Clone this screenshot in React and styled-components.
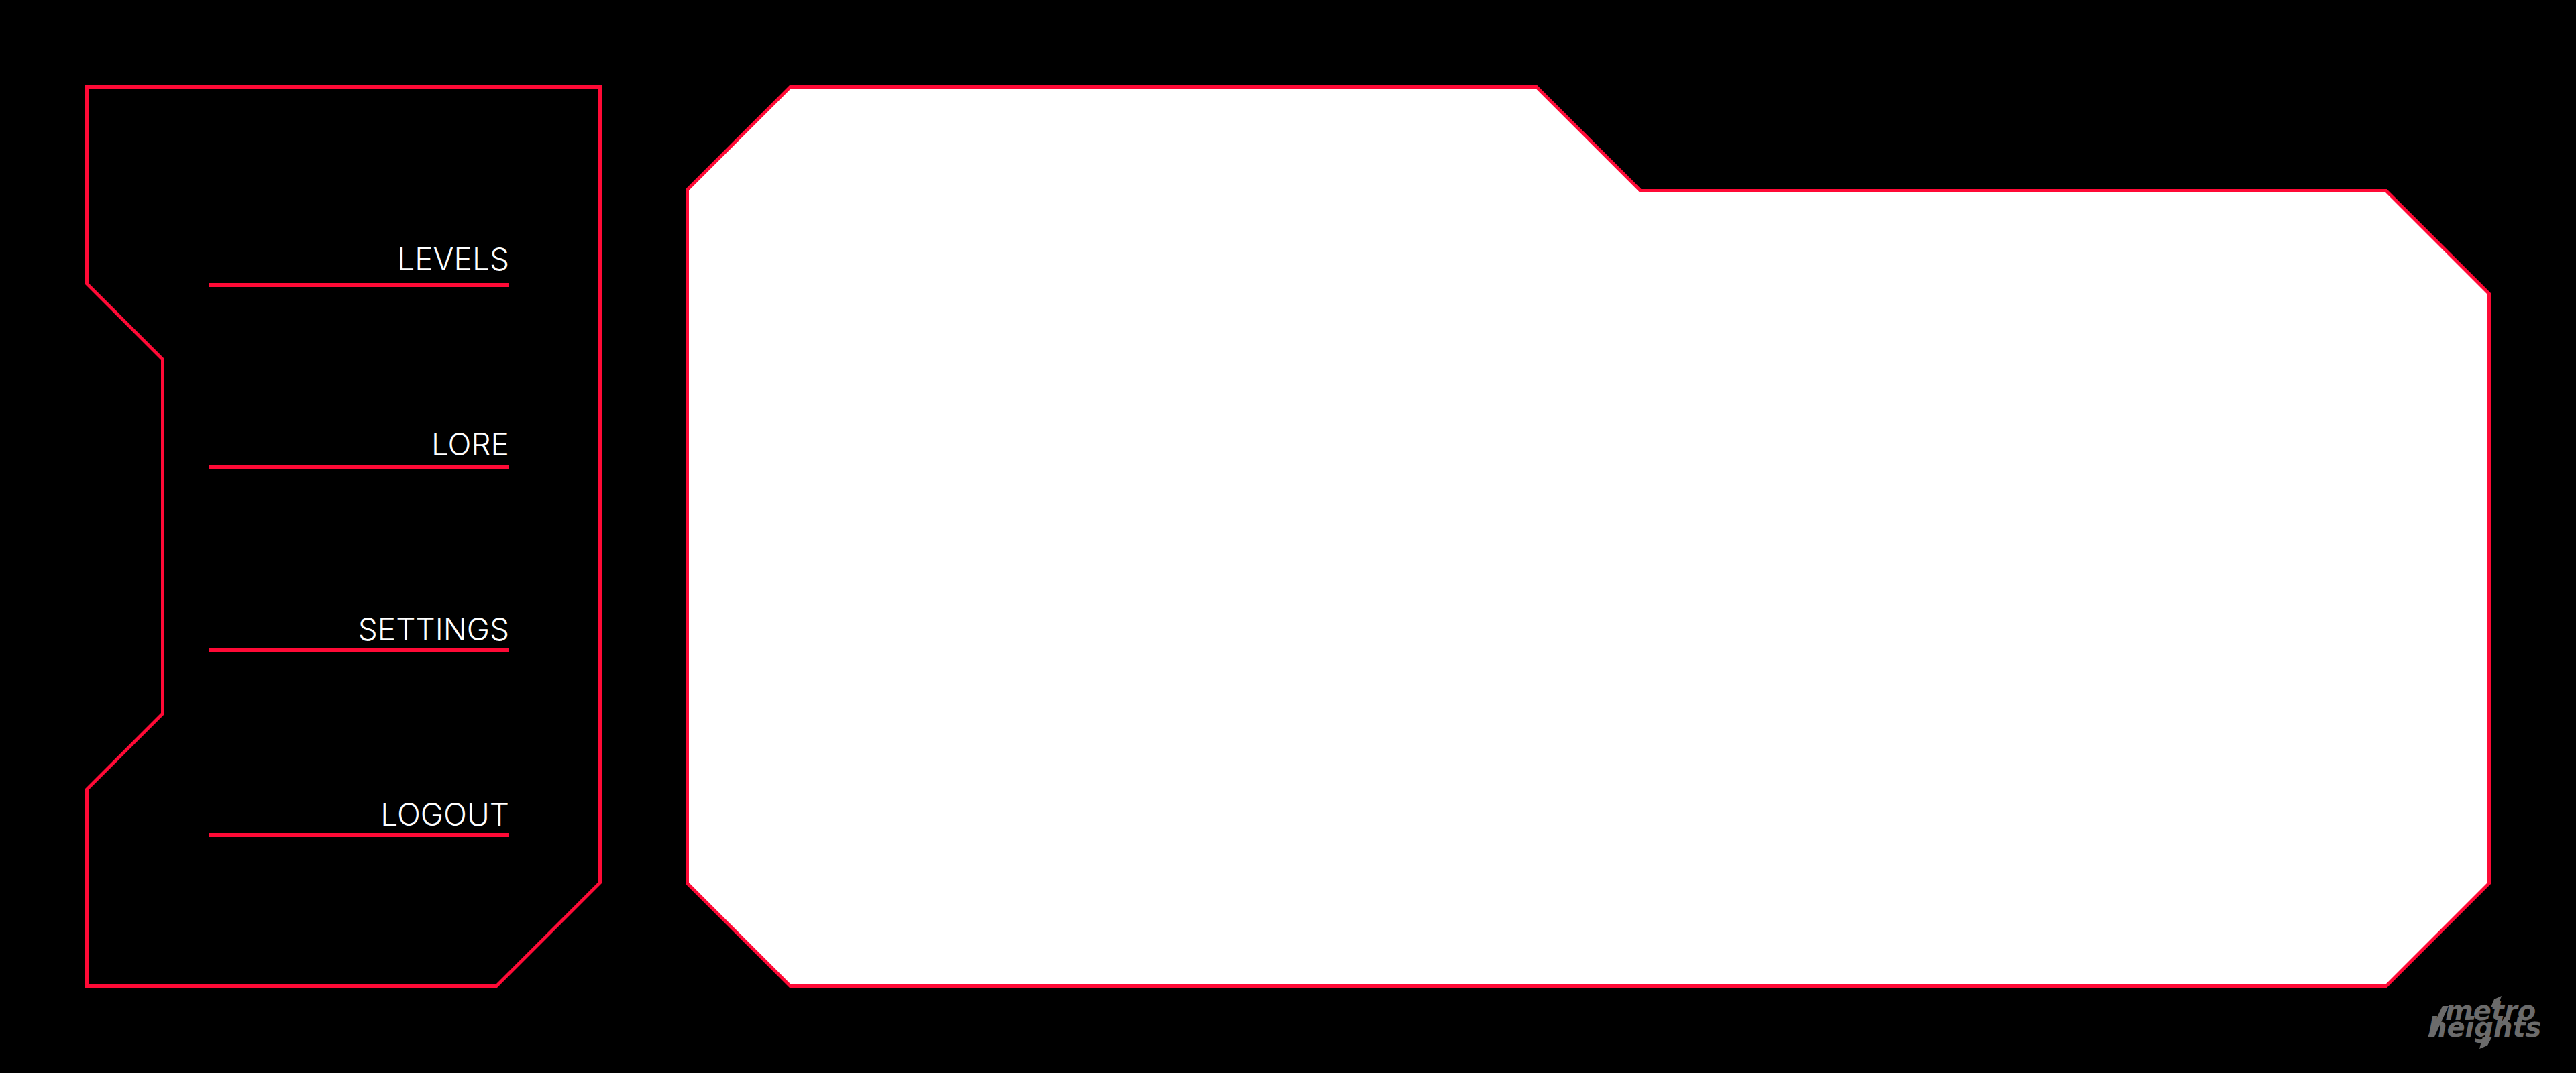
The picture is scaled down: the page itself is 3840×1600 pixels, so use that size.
import React from "react";
import styled, { createGlobalStyle } from "styled-components";

const RED = "#ff0a36";

const GlobalStyle = createGlobalStyle`
  *, *::before, *::after { box-sizing: border-box; }
  body {
    margin: 0;
    background: #000;
    font-family: Inter, "Liberation Sans", sans-serif;
  }
`;

const Page = styled.div`
  position: relative;
  display: flex;
  gap: 125px;
  min-height: 100vh;
  padding: 127px;
  background: #000;
`;

/* A cut-corner panel: the element is the border, ::before is the fill. */
const Frame = styled.div`
  position: relative;
  display: flex;
  background: ${RED};
  clip-path: ${(p) => p.$outer};

  &::before {
    content: "";
    position: absolute;
    inset: 5px;
    background: ${(p) => p.$fill};
    clip-path: ${(p) => p.$inner};
  }
`;

const SIDE_OUTER = `polygon(
  0 0, 100% 0, 100% calc(100% - 156px), calc(100% - 156px) 100%, 0 100%,
  0 calc(100% - 297px), 113px calc(100% - 410px), 113px 410px, 0 297px)`;
const SIDE_INNER = `polygon(
  0 0, 100% 0, 100% calc(100% - 153px), calc(100% - 153px) 100%, 0 100%,
  0 calc(100% - 290px), 113px calc(100% - 403px), 113px 403px, 0 290px)`;

const MAIN_OUTER = `polygon(
  0 155px, 155px 0, calc(50% - 76px) 0, calc(50% + 79px) 155px,
  calc(100% - 155px) 155px, 100% 310px, 100% calc(100% - 155px),
  calc(100% - 155px) 100%, 155px 100%, 0 calc(100% - 155px))`;
const MAIN_INNER = `polygon(
  0 152px, 152px 0, calc(50% - 78px) 0, calc(50% + 77px) 155px,
  calc(100% - 152px) 155px, 100% 307px, 100% calc(100% - 152px),
  calc(100% - 152px) 100%, 152px 100%, 0 calc(100% - 152px))`;

const Sidebar = styled(Frame)`
  flex: 0 0 770px;
  align-items: center;
  padding: 0 138px 0 185px;
`;

const Content = styled(Frame)`
  flex: 1;
`;

const Menu = styled.nav`
  position: relative;
  display: flex;
  flex-direction: column;
  flex: 1;
  height: 82%;
`;

const MenuLink = styled.a`
  flex: 1;
  display: grid;
  grid-template-rows: 1fr auto 1fr;
  color: #fff;
  font-size: 46px;
  font-weight: 300;
  line-height: 32px;
  text-align: right;
  text-decoration: none;

  &::before {
    content: "";
  }

  &::after {
    content: "";
    height: 6px;
    margin-top: ${(p) => p.$gap}px;
    background: ${RED};
  }
`;

const Logo = styled.svg`
  position: absolute;
  right: 40px;
  bottom: 32px;
  width: 184px;
  height: 88px;
  fill: #6b6b6b;
  font-family: "DejaVu Sans", sans-serif;
  font-size: 40px;
  font-weight: 700;
  font-style: italic;
`;

const ITEMS = [
  { label: "LEVELS", gap: 20 },
  { label: "LORE", gap: 16 },
  { label: "SETTINGS", gap: 12 },
  { label: "LOGOUT", gap: 12 },
];

export default function App() {
  return (
    <>
      <GlobalStyle />
      <Page>
        <Sidebar $outer={SIDE_OUTER} $inner={SIDE_INNER} $fill="#000">
          <Menu aria-label="Main menu">
            {ITEMS.map((item) => (
              <MenuLink key={item.label} href="#" $gap={item.gap}>
                {item.label}
              </MenuLink>
            ))}
          </Menu>
        </Sidebar>
        <Content as="main" $outer={MAIN_OUTER} $inner={MAIN_INNER} $fill="#fff" />
        <Logo viewBox="0 0 184 88" role="img" aria-label="metro heights">
          <text>
            <tspan x="29" y="41">metro</tspan>
            <tspan x="3" y="66">heights</tspan>
          </text>
          <polygon points="3,66 25,20 34,20 13,66" />
          <polygon points="97,22 102,10 113,5 107,22" />
          <polygon points="112,46 118,36 127,31 121,46" />
          <polygon points="85,66 99,66 92,79 80,84" />
        </Logo>
      </Page>
    </>
  );
}
